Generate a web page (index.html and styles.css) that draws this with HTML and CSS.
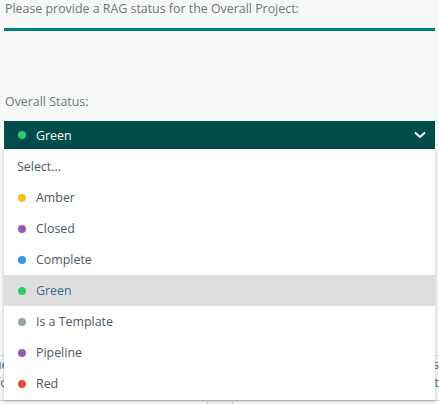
FILE: index.html
```html
<!DOCTYPE html>
<html>
<head>
<meta charset="utf-8">
<link rel="stylesheet" href="styles.css">
</head>
<body>
<div class="page">
  <div class="question">Please provide a RAG status for the Overall Project:</div>
  <div class="answer-line"></div>
  <div class="label">Overall Status:</div>
  <div class="select">
    <div class="select-head">
      <span class="dot" style="background:#2ecc71"></span>
      <span class="select-value">Green</span>
      <svg class="chev" width="12" height="8" viewBox="0 0 12 8"><path d="M1 1.5 L6 6 L11 1.5" fill="none" stroke="#ffffff" stroke-width="2"/></svg>
    </div>
    <ul class="menu">
      <li class="opt plain">Select...</li>
      <li class="opt"><span class="dot" style="background:#f1c40f"></span>Amber</li>
      <li class="opt"><span class="dot" style="background:#9b59b6"></span>Closed</li>
      <li class="opt"><span class="dot" style="background:#3498db"></span>Complete</li>
      <li class="opt active"><span class="dot" style="background:#2ecc71"></span>Green</li>
      <li class="opt"><span class="dot" style="background:#95a5a6"></span>Is a Template</li>
      <li class="opt"><span class="dot" style="background:#9b59b6"></span>Pipeline</li>
      <li class="opt"><span class="dot" style="background:#e74c3c"></span>Red</li>
    </ul>
  </div>
  <div class="under">
    <div class="under-row"><span class="clip-left">Due</span><span>Status</span></div>
    <div class="under-row"><span class="clip-left">Info</span><span>Project</span></div>
    <div class="under-foot"><div class="foot-box"></div></div>
  </div>
</div>
</body>
</html>
```
FILE: styles.css
```css
html, body {
  margin: 0;
  padding: 0;
  background: #f6f8f8;
  font-family: "Open Sans", "Noto Sans", sans-serif;
  overflow: hidden;
}
.page {
  padding: 0 4px;
  width: 431px;
}
.question {
  font-size: 12.4px;
  line-height: 18px;
  color: #6f7478;
  padding-left: 1px;
}
.answer-line {
  margin-top: 10px;
  height: 3px;
  background: #00807a;
}
.label {
  margin-top: 62px;
  font-size: 12.4px;
  line-height: 18px;
  color: #6f7478;
  padding-left: 1px;
}
.select {
  position: relative;
  margin-top: 10px;
}
.select-head {
  height: 28px;
  background: #004d4c;
  display: flex;
  align-items: center;
  padding-left: 14px;
  color: #fff;
  font-size: 12.4px;
}
.select-head .dot { margin-right: 10px; }
.select-value { flex: 1; }
.chev { margin-right: 9px; }
.dot {
  display: inline-block;
  width: 8px;
  height: 8px;
  border-radius: 50%;
  flex: none;
}
.menu {
  position: absolute;
  top: 28px;
  left: 0;
  width: 431px;
  margin: 0;
  padding: 2px 0 1px;
  list-style: none;
  background: #fff;
  box-shadow: 0 1px 3px rgba(0,0,0,0.25);
  z-index: 2;
}
.opt {
  height: 31px;
  display: flex;
  align-items: center;
  padding-left: 14px;
  font-size: 12.4px;
  color: #4a5868;
}
.opt .dot { margin-right: 10px; }
.opt.plain { padding-left: 13px; color: #4a5868; }
.opt.active { background: #dedede; color: #3a6a94; }
.under {
  margin-top: 206px;
  margin-left: -4px;
  margin-right: -4px;
  border-top: 1px solid #dcdcdc;
  font-size: 12.4px;
  color: #4a6a8a;
}
.under-row {
  height: 18px;
  line-height: 18px;
  display: flex;
  justify-content: space-between;
  overflow: hidden;
}
.clip-left { margin-left: -15px; }
.under-foot {
  margin-top: 8px;
  border-top: 1px solid #cfcfcf;
  height: 6px;
}
.foot-box {
  margin-left: 207px;
  width: 24px;
  height: 6px;
  border-left: 1px solid #cfcfcf;
  border-right: 1px solid #cfcfcf;
  background: #f0f0f0;
}
```
